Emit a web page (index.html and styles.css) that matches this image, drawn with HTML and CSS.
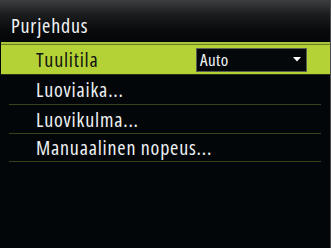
FILE: index.html
```html
<!DOCTYPE html>
<html lang="fi">
<head>
<meta charset="utf-8">
<link rel="stylesheet" href="styles.css">
</head>
<body>
<div class="screen">
  <div class="header"><span class="title">Purjehdus</span></div>
  <div class="selected">
    <div class="sel-inner">
      <span class="label">Tuulitila</span>
      <div class="dropdown">
        <span class="dd-text">Auto</span>
        <svg class="dd-arrow" width="8" height="5" viewBox="0 0 8 5"><polygon points="0,0 8,0 4,4.5" fill="#ffffff"/></svg>
      </div>
    </div>
  </div>
  <div class="list">
    <div class="row first"><span class="label">Luoviaika...</span></div>
    <div class="row"><span class="label">Luovikulma...</span></div>
    <div class="row last"><span class="label">Manuaalinen nopeus...</span></div>
  </div>
</div>
</body>
</html>
```
FILE: styles.css
```css
html, body {
  margin: 0;
  padding: 0;
  background: #020608;
}
.screen {
  width: 330px;
  height: 248px;
  border-right: 1px solid #4a4c4e;
  background: #020608;
  font-family: "Open Sans", "Liberation Sans", sans-serif;
  font-stretch: 75%;
  font-weight: 500;
  overflow: hidden;
}
.header {
  height: 42px;
  background: linear-gradient(to bottom, #3e3f41 0px, #1c1d1f 14px, #07090a 32px, #050607 42px);
  display: flex;
  align-items: center;
  padding-left: 11px;
  box-sizing: border-box;
}
.title {
  color: #f2f4f8;
  font-size: 20px;
  letter-spacing: 0.8px;
  padding-top: 8px;
}
.selected {
  margin-left: 1px;
  border-top: 2px solid #a9c63a;
  background: #6a7b20;
  padding-top: 1px;
}
.sel-inner {
  background: #b4d235;
  height: 29px;
  display: flex;
  align-items: center;
  padding-left: 35px;
  border-bottom: 1px solid #2a3010;
}
.label {
  font-size: 20px;
  letter-spacing: 0.8px;
}
.sel-inner .label {
  color: #121410;
  width: 160px;
}
.dropdown {
  width: 101px;
  height: 22px;
  border: 1px solid #5a5e56;
  background: #05080a;
  display: flex;
  align-items: center;
  justify-content: space-between;
  padding: 0 5px 0 3px;
}
.dd-text {
  color: #f4f6fa;
  font-size: 17px;
  letter-spacing: 0.4px;
}
.dd-arrow {
  display: block;
  margin-bottom: 1px;
}
.list {
  padding: 0 9px;
}
.row {
  height: 28px;
  border-bottom: 1px solid #3a4019;
  display: flex;
  align-items: center;
  padding-left: 27px;
}
.row.first {
  height: 29px;
}
.row.last {
  height: 27px;
}
.row .label {
  color: #eef0f4;
}
```
